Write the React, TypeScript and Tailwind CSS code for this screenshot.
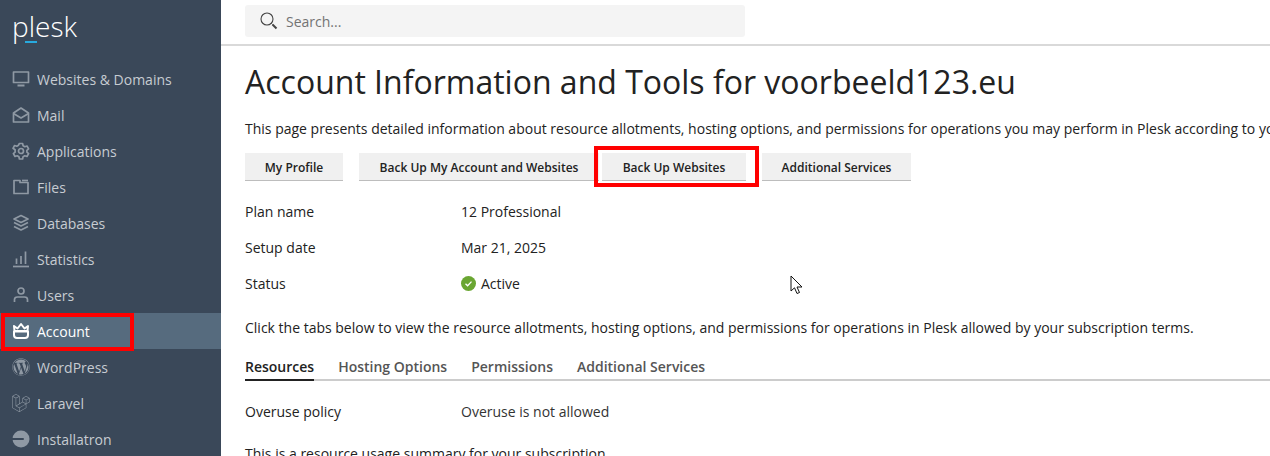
import { ReactNode } from "react";
import { FaWordpress, FaLaravel } from "react-icons/fa";

const stroke = {
  fill: "none",
  stroke: "currentColor",
  strokeWidth: 1.7,
  strokeLinejoin: "round" as const,
  strokeLinecap: "butt" as const,
};

const Icon = ({ children }: { children: ReactNode }) => (
  <svg width="18" height="18" viewBox="0 0 18 18" className="shrink-0" {...stroke}>
    {children}
  </svg>
);

const navItems: { label: string; icon: ReactNode; active?: boolean }[] = [
  {
    label: "Websites & Domains",
    icon: (
      <Icon>
        <rect x="1.500" y="2" width="15" height="10.500" />
        <path d="M5.500 15.500h7" strokeWidth="2" />
      </Icon>
    ),
  },
  {
    label: "Mail",
    icon: (
      <Icon>
        <path d="M1.500 7 9 2l7.500 5v9h-15z" />
        <path d="M1.500 7.500 9 12l7.500-4.500" />
      </Icon>
    ),
  },
  {
    label: "Applications",
    icon: (
      <Icon>
        <path d="M7.400 1.500h3.200l.5 2.200 1.700 1 2.200-.7 1.600 2.800-1.700 1.500v1.900l1.700 1.500-1.600 2.800-2.200-.7-1.700 1-.5 2.200H7.400l-.5-2.200-1.700-1-2.200.7-1.600-2.800 1.700-1.500V7.800L1 6.300l1.600-2.800 2.200.7 1.700-1z" />
        <circle cx="9" cy="9" r="2.500" />
      </Icon>
    ),
  },
  {
    label: "Files",
    icon: (
      <Icon>
        <path d="M2 2.500V15.500h14V4.500H8V2.500z" />
        <path d="M10 2.500h6" />
      </Icon>
    ),
  },
  {
    label: "Databases",
    icon: (
      <Icon>
        <path d="M9 1.500 16 5 9 8.500 2 5z" />
        <path d="M2 8.500l7 3.500 7-3.500" />
        <path d="M2 12.500 9 16l7-3.500" />
      </Icon>
    ),
  },
  {
    label: "Statistics",
    icon: (
      <Icon>
        <path d="M1 16.500h16" />
        <path d="M4.500 14V8.500M9 14V6M13.500 14V1.500" />
      </Icon>
    ),
  },
  {
    label: "Users",
    icon: (
      <Icon>
        <circle cx="9" cy="5" r="3" />
        <path d="M2.500 16v-2.500c0-1.500 1.500-2.500 3-2.500h7c1.500 0 3 1 3 2.500V16" />
      </Icon>
    ),
  },
  {
    label: "Account",
    active: true,
    icon: (
      <svg width="18" height="18" viewBox="0 0 18 18" className="shrink-0" fill="none" stroke="currentColor" strokeWidth="2" strokeLinejoin="round">
        <path d="M2 4l3.500 2.500L9 2l3.500 4.500L16 4l-.5 5h-13z" />
        <path d="M2 9.500h14V13a3 3 0 0 1-3 3H5a3 3 0 0 1-3-3z" />
      </svg>
    ),
  },
  { label: "WordPress", icon: <FaWordpress className="shrink-0 text-[18px]" /> },
  { label: "Laravel", icon: <FaLaravel className="shrink-0 text-[18px]" /> },
  {
    label: "Installatron",
    icon: (
      <svg width="18" height="18" viewBox="0 0 18 18" className="shrink-0">
        <circle cx="9" cy="9" r="8.500" fill="currentColor" />
        <path d="M0 9h11" stroke="#3a4859" strokeWidth="2" strokeLinecap="round" />
      </svg>
    ),
  },
];

const tabs = ["Resources", "Hosting Options", "Permissions", "Additional Services"];

const ActionButton = ({ label, className }: { label: string; className: string }) => (
  <button
    className={`h-[28px] border-b border-[#bdbdbd] bg-[#f0f0f0] pt-[2px] text-[12px] font-semibold text-[#222222] ${className}`}
  >
    {label}
  </button>
);

const Sidebar = () => (
  <aside className="relative h-full w-[221px] shrink-0 bg-[#3a4859]">
    <div className="relative h-[61px] pl-[12px] pt-[4px]">
      <span className="block text-[28px] font-light leading-[44px] text-white">plesk</span>
      <span className="absolute left-[25px] top-[41px] h-[2px] w-[12px] bg-[#28aade]" />
    </div>
    <nav>
      {navItems.map(({ label, icon, active }) => (
        <div
          key={label}
          className={`flex h-9 items-center gap-[7px] pl-[12px] text-[14px] ${
            active ? "bg-[#566b7e] text-white" : "text-[#c7ccd2]"
          }`}
        >
          <span className={active ? "text-white" : "text-[#8f99a4]"}>{icon}</span>
          <span>{label}</span>
        </div>
      ))}
    </nav>
    <div className="absolute left-[1px] top-[313px] h-[38px] w-[133px] border-4 border-[#ff0000]" />
  </aside>
);

const InfoRow = ({ name, children }: { name: string; children: ReactNode }) => (
  <div className="flex h-9 items-center">
    <span className="w-[216px] shrink-0">{name}</span>
    {children}
  </div>
);

const App = () => (
  <div className="flex h-[456px] w-[1270px] overflow-hidden bg-white font-['Open_Sans',sans-serif] text-[14px] text-[#222222]">
    <Sidebar />
    <div className="min-w-0 flex-1">
      <header className="h-[46px] border-b-2 border-[#d9d9d9] pl-[24px] pt-[5px]">
        <div className="flex h-[32px] w-[500px] items-center gap-[8px] rounded-[3px] bg-[#f4f4f4] pl-[15px] text-[#737373]">
          <svg width="18" height="18" viewBox="0 0 18 18" fill="none" stroke="#444444">
            <circle cx="7" cy="7" r="6" strokeWidth="1.100" />
            <path d="m11.500 11.500 1 1" strokeWidth="1" />
            <path d="m12.500 12.500 4 4" strokeWidth="2" />
          </svg>
          <span>Search...</span>
        </div>
      </header>
      <main className="pl-[24px]">
        <h1 className="mt-[14px] whitespace-nowrap text-[32px] leading-[44px]">
          Account Information and Tools for voorbeeld123.eu
        </h1>
        <p className="mt-[15px] whitespace-nowrap leading-[20px]">
          This page presents detailed information about resource allotments, hosting options, and permissions for
          operations you may perform in Plesk according to your subscription terms.
        </p>
        <div className="relative mt-[14px] flex">
          <ActionButton label="My Profile" className="w-[98px]" />
          <ActionButton label="Back Up My Account and Websites" className="ml-4 w-[240px]" />
          <ActionButton label="Back Up Websites" className="ml-[3px] w-[144px]" />
          <ActionButton label="Additional Services" className="ml-4 w-[149px]" />
          <div className="absolute left-[349px] top-[-7px] h-[41px] w-[165px] border-4 border-[#ff0000]" />
        </div>
        <div className="mt-[12px]">
          <InfoRow name="Plan name">
            <span>12 Professional</span>
          </InfoRow>
          <InfoRow name="Setup date">
            <span>Mar 21, 2025</span>
          </InfoRow>
          <InfoRow name="Status">
            <span className="flex items-center gap-[5px]">
              <svg width="15" height="15" viewBox="0 0 15 15">
                <circle cx="7.500" cy="7.500" r="7.500" fill="#6aa632" />
                <path d="m4.500 7.700 2.100 2.100 3.900-4.200" fill="none" stroke="#ffffff" strokeWidth="1.300" />
              </svg>
              Active
            </span>
          </InfoRow>
        </div>
        <p className="mt-[17px] whitespace-nowrap leading-[20px]">
          Click the tabs below to view the resource allotments, hosting options, and permissions for operations in
          Plesk allowed by your subscription terms.
        </p>
        <div className="mt-[17px] flex h-[26px] gap-[24px] border-b-2 border-[#cccccc]">
          {tabs.map((tab, index) => (
            <div
              key={tab}
              className={`-mb-[2px] h-[26px] pt-[2px] font-semibold leading-[20px] ${
                index === 0 ? "border-b-2 border-[#222222] text-[#222222]" : "text-[#555555]"
              }`}
            >
              {tab}
            </div>
          ))}
        </div>
        <div className="mt-[12px]">
          <InfoRow name="Overuse policy">
            <span className="text-[#333333]">Overuse is not allowed</span>
          </InfoRow>
        </div>
        <p className="mt-[15px] whitespace-nowrap leading-[20px]">This is a resource usage summary for your subscription.</p>
      </main>
    </div>
    <svg width="14" height="20" viewBox="0 0 14 20" className="absolute left-[790px] top-[275px]">
      <path d="M1 1v15l3.500-3.200L7 18.500l2.500-1-2.500-5.500h5z" fill="#ffffff" stroke="#111111" strokeWidth="1" />
    </svg>
  </div>
);

export default App;
